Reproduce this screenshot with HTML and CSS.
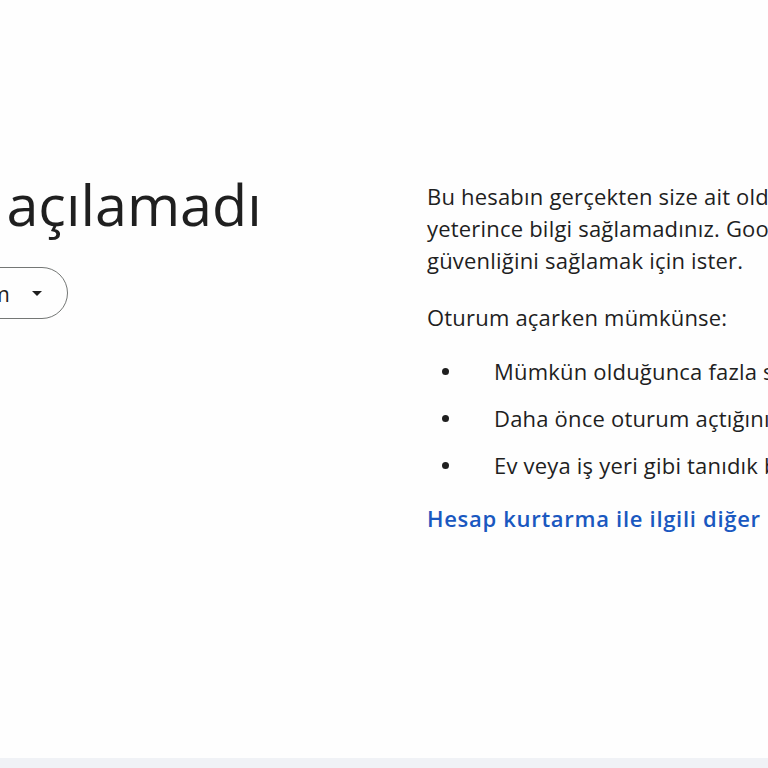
FILE: index.html
```html
<!DOCTYPE html>
<html lang="tr">
<head>
<meta charset="utf-8">
<title>Oturum açılamadı</title>
<link rel="stylesheet" href="styles.css">
</head>
<body>
<div class="page">
  <main class="layout">
    <section class="left">
      <h1 class="title">Oturum açılamadı</h1>
      <button class="chip" type="button">
        <span class="chip-label">kullanici@gmail.com</span>
        <span class="chip-arrow"></span>
      </button>
    </section>
    <section class="right">
      <p class="para">Bu hesabın gerçekten size ait olduğunu doğrulamak için<br>yeterince bilgi sağlamadınız. Google bu bilgileri hesabınızın<br>güvenliğini sağlamak için ister.</p>
      <p class="para para-gap">Oturum açarken mümkünse:</p>
      <ul class="list">
        <li class="item"><span class="dot-box"><span class="dot"></span></span><span>Mümkün olduğunca fazla soruyu yanıtlayın</span></li>
        <li class="item"><span class="dot-box"><span class="dot"></span></span><span>Daha önce oturum açtığınız bir cihazı kullanın</span></li>
        <li class="item"><span class="dot-box"><span class="dot"></span></span><span>Ev veya iş yeri gibi tanıdık bir Wi-Fi ağı kullanın</span></li>
      </ul>
      <a class="link" href="#">Hesap kurtarma ile ilgili diğer ipuçları</a>
    </section>
  </main>
  <footer class="strip"></footer>
</div>
</body>
</html>
```

FILE: styles.css
```css
html, body {
  margin: 0;
  padding: 0;
  background: #fefefe;
}
body {
  width: 768px;
  height: 768px;
  overflow: hidden;
  font-family: "Open Sans", Roboto, "Liberation Sans", sans-serif;
  color: #1f1f1f;
}
.page {
  height: 768px;
  display: flex;
  flex-direction: column;
}
.layout {
  flex: 1;
  display: flex;
  padding-top: 172px;
  overflow: hidden;
}
.left {
  flex: none;
  width: 648px;
  margin-left: -221px;
  display: flex;
  flex-direction: column;
  align-items: flex-start;
}
.title {
  margin: 0;
  font-family: "Open Sans", Roboto, sans-serif;
  font-weight: 400;
  font-size: 57.5px;
  line-height: 64px;
  white-space: nowrap;
}
.chip {
  margin-top: 31px;
  height: 52px;
  box-sizing: border-box;
  border: 1px solid #747775;
  border-radius: 26px;
  background: transparent;
  display: flex;
  align-items: center;
  gap: 22px;
  padding: 0 25px 0 21px;
  font-family: "Open Sans", Roboto, sans-serif;
  font-size: 22px;
  color: #1f1f1f;
}
.chip-arrow {
  width: 0;
  height: 0;
  border-left: 5.5px solid transparent;
  border-right: 5.5px solid transparent;
  border-top: 5.5px solid #1f1f1f;
}
.right {
  flex: none;
  margin-top: 8px;
  white-space: nowrap;
  font-size: 22px;
  letter-spacing: 0.2px;
  line-height: 32px;
}
.para {
  margin: 0;
}
.para-gap {
  margin-top: 25px;
}
.list {
  list-style: none;
  margin: 22px 0 0 0;
  padding: 0;
  display: flex;
  flex-direction: column;
  gap: 15px;
}
.item {
  display: flex;
  align-items: center;
}
.dot-box {
  width: 36px;
  margin-right: 31px;
  display: flex;
  justify-content: center;
}
.dot {
  width: 7px;
  height: 7px;
  border-radius: 50%;
  background: #1f1f1f;
}
.link {
  display: block;
  margin-top: 21px;
  color: #1a58c0;
  font-weight: 600;
  letter-spacing: 0.7px;
  text-decoration: none;
}
.strip {
  flex: none;
  height: 10px;
  background: #f0f2f6;
}
```
